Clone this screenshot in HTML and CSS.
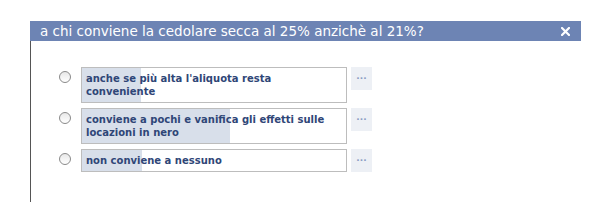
FILE: index.html
```html
<!DOCTYPE html>
<html lang="it">
<head>
    <meta charset="UTF-8">
    <title>Domanda</title>
    <link rel="stylesheet" href="styles.css">
</head>
<body>
<div class="dialog">
    <div class="dialog-head">
        <span class="dialog-title">a chi conviene la cedolare secca al 25% anzichè al 21%?</span>
        <svg class="close" width="9" height="9" viewBox="0 0 9 9">
            <path d="M1 1 L8 8 M8 1 L1 8" stroke="#fff" stroke-width="2.2" stroke-linecap="square"/>
        </svg>
    </div>
    <div class="dialog-body">
        <!-- opzioni del sondaggio -->
        <div class="option">
            <span class="radio"></span>
            <div class="answer">
                <div class="fill" style="width: 59px"></div>
                <span class="label">anche se più alta l'aliquota resta conveniente</span>
            </div>
            <span class="more">...</span>
        </div>
        <div class="option">
            <span class="radio"></span>
            <div class="answer">
                <div class="fill" style="width: 148px"></div>
                <span class="label">conviene a pochi e vanifica gli effetti sulle locazioni in nero</span>
            </div>
            <span class="more">...</span>
        </div>
        <div class="option">
            <span class="radio"></span>
            <div class="answer">
                <div class="fill" style="width: 60px"></div>
                <span class="label">non conviene a nessuno</span>
            </div>
            <span class="more">...</span>
        </div>
    </div>
</div>
</body>
</html>
```

FILE: styles.css
```css
body{
    margin: 0;
    background: #fff;
}
.dialog{
    width: 551px;
    margin: 21px 0 0 30px;
}
.dialog-head{
    display: flex;
    align-items: center;
    justify-content: space-between;
    height: 20px;
    padding: 0 11px 0 10px;
    background: #6d84b4;
    color: #fff;
    font-family: "DejaVu Sans", sans-serif;
    font-size: 13.5px;
}
.dialog-head .close{
    display: block;
}
.dialog-body{
    height: 135px;
    padding-top: 26px;
    border-left: 1px solid #555;
}
.option{
    display: flex;
    align-items: flex-start;
    margin: 0 0 5px 28px;
}
.radio{
    width: 10px;
    height: 10px;
    margin-top: 4px;
    border: 1px solid #8a8a8a;
    border-radius: 50%;
    background: linear-gradient(#e8e8e8, #fff);
}
.answer{
    position: relative;
    width: 264px;
    margin-left: 10px;
    border: 1px solid #bdbdbd;
    background: #fff;
}
.answer .fill{
    position: absolute;
    top: 0;
    bottom: 0;
    left: 0;
    background: #d8dfea;
}
.answer .label{
    position: relative;
    display: block;
    width: 248px;
    padding: 4px 4px;
    color: #2f4677;
    font-family: "DejaVu Sans", sans-serif;
    font-size: 10px;
    font-weight: bold;
    line-height: 13px;
}
.more{
    width: 21px;
    height: 23px;
    margin-left: 4px;
    background: #edf0f5;
    color: #8b9dc3;
    font-family: "DejaVu Sans", sans-serif;
    font-size: 9px;
    font-weight: bold;
    line-height: 19px;
    text-align: center;
}
```
